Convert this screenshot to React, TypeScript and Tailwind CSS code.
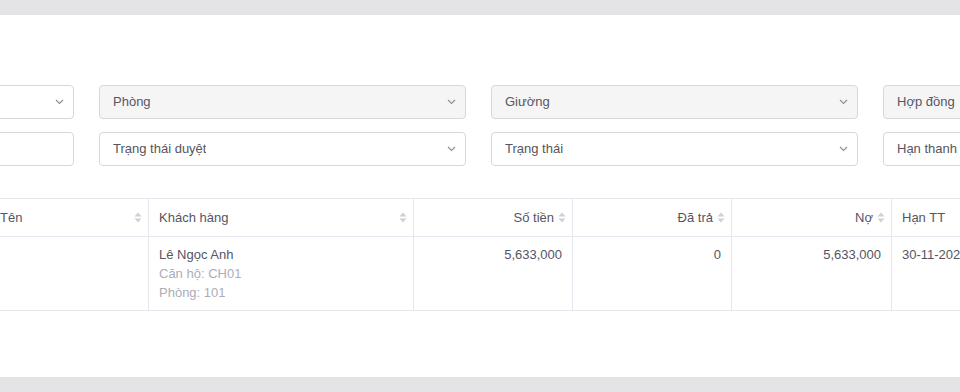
import { ReactNode } from 'react';

function Chevron() {
  return (
    <svg width="9" height="6" viewBox="0 0 9 6" className="shrink-0">
      <path d="M1 1l3.5 3.5L8 1" fill="none" stroke="#8c8c99" strokeWidth="1.1" />
    </svg>
  );
}

function SortIcon() {
  return (
    <svg width="8" height="11" viewBox="0 0 8 11" className="shrink-0">
      <path d="M4 0.5L7.5 4.5H0.5Z" fill="#cfcfd8" />
      <path d="M4 10.5L7.5 6.5H0.5Z" fill="#cfcfd8" />
    </svg>
  );
}

function Field({ label, grey, arrow }: { label?: string; grey?: boolean; arrow?: boolean }) {
  return (
    <div
      className={`h-[34px] border border-[#d6d6df] rounded-[4px] flex items-center justify-between pl-[13px] pr-[9px] ${
        grey ? 'bg-[#f5f5f6]' : 'bg-white'
      }`}
    >
      <span className="text-[13px] text-[#555562] truncate">{label}</span>
      {arrow && <Chevron />}
    </div>
  );
}

function Th({ children, right, sort = true, last }: { children: ReactNode; right?: boolean; sort?: boolean; last?: boolean }) {
  return (
    <div
      className={`flex items-center gap-[4px] pl-[10px] pr-[6px] border-b border-[#e6e6ee] ${last ? '' : 'border-r'} ${
        right ? 'justify-end' : 'justify-between'
      }`}
    >
      <span className="text-[13px] text-[#555562] whitespace-nowrap">{children}</span>
      {sort && <SortIcon />}
    </div>
  );
}

function Td({ children, right, last }: { children?: ReactNode; right?: boolean; last?: boolean }) {
  return (
    <div
      className={`px-[10px] pt-[8px] pb-[8px] text-[13px] leading-[19px] text-[#555562] border-b border-[#e6e6ee] whitespace-nowrap ${
        last ? '' : 'border-r'
      } ${right ? 'text-right' : ''}`}
    >
      {children}
    </div>
  );
}

export default function App() {
  return (
    <div
      className="h-[392px] bg-[#e4e4e6] py-[15px] overflow-hidden"
      style={{ fontFamily: '"Liberation Sans", Arial, sans-serif' }}
    >
      <div className="h-full bg-white overflow-hidden pt-[70px]">
        {/* Bộ lọc */}
        <div className="ml-[-293px] grid grid-cols-[repeat(4,367px)] gap-x-[25px] gap-y-[13px] w-max">
          <Field arrow />
          <Field label="Phòng" grey arrow />
          <Field label="Giường" grey arrow />
          <Field label="Hợp đồng" grey arrow />
          <Field />
          <Field label="Trạng thái duyệt" arrow />
          <Field label="Trạng thái" arrow />
          <Field label="Hạn thanh toán" />
        </div>

        {/* Bảng */}
        <div className="mt-[32px] ml-[-10px] w-max border-t border-[#e6e6ee]">
          <div className="grid grid-cols-[159px_265px_159px_159px_160px_200px] h-[38px]">
            <Th>Tên</Th>
            <Th>Khách hàng</Th>
            <Th right>Số tiền</Th>
            <Th right>Đã trả</Th>
            <Th right>Nợ</Th>
            <Th sort={false} last>Hạn TT</Th>
          </div>
          <div className="grid grid-cols-[159px_265px_159px_159px_160px_200px]">
            <Td />
            <Td>
              <div>Lê Ngọc Anh</div>
              <div className="text-[#adadb8]">Căn hộ: CH01</div>
              <div className="text-[#adadb8]">Phòng: 101</div>
            </Td>
            <Td right>5,633,000</Td>
            <Td right>0</Td>
            <Td right>5,633,000</Td>
            <Td last>30-11-2022</Td>
          </div>
        </div>
      </div>
    </div>
  );
}
